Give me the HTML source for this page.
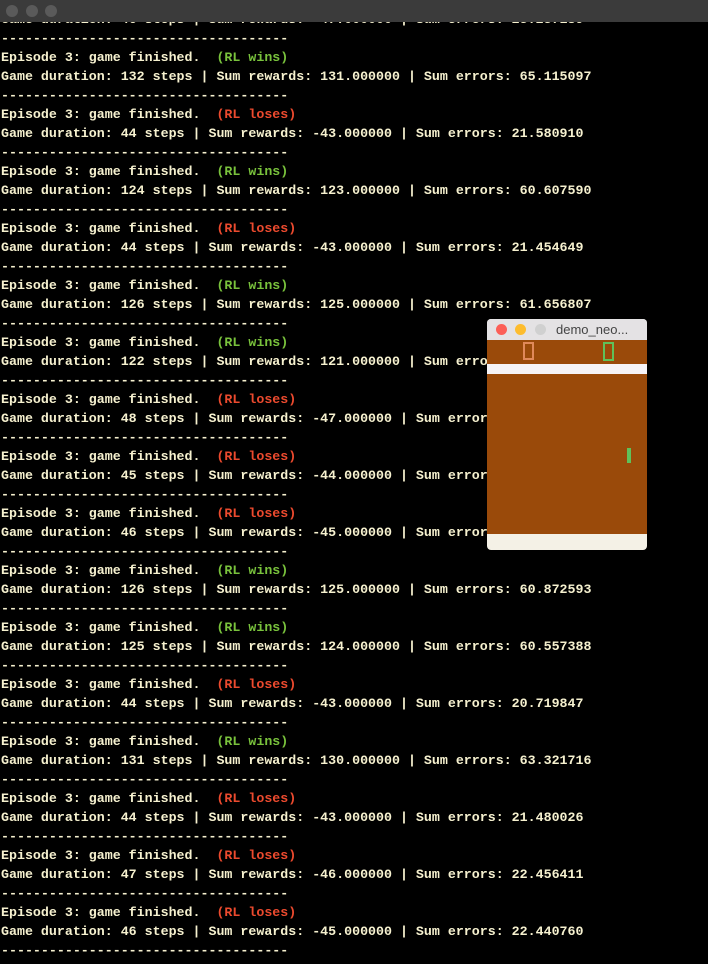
<!DOCTYPE html>
<html><head><meta charset="utf-8"><style>
body{margin:0;background:#000;width:708px;height:964px;overflow:hidden;position:relative;font-family:"Liberation Mono",monospace;}
#bar{position:absolute;left:0;top:0;width:708px;height:22px;background:#3b3b3b;z-index:2}
.d{position:absolute;top:5px;width:12px;height:12px;border-radius:50%;background:#5a5a5a}
#t{position:absolute;left:1px;top:10px;font-size:13.3px;line-height:19px;color:#f6f1cf;white-space:pre;font-weight:bold}
.g{color:#79c23c}.r{color:#ec4a2e}
#w{position:absolute;left:487px;top:319px;width:160px;height:231px;background:#f4f1e6;border-radius:4px;overflow:hidden}
#tb{height:21px;background:#e4e2e4;font-family:"Liberation Sans",sans-serif;font-size:13px;color:#444;line-height:21px}
.c{position:absolute;top:5px;width:11px;height:11px;border-radius:50%}
#gm{position:absolute;left:0;top:21px;width:160px;height:194px;background:#9a4a0a}
</style></head><body>
<div id="bar"><div class="d" style="left:6px"></div><div class="d" style="left:26px"></div><div class="d" style="left:45px"></div></div>
<div id="t">Game duration: 46 steps | Sum rewards: -47.000000 | Sum errors: 23.237189
------------------------------------
Episode 3: game finished.  <span class="g">(RL wins)</span>
Game duration: 132 steps | Sum rewards: 131.000000 | Sum errors: 65.115097
------------------------------------
Episode 3: game finished.  <span class="r">(RL loses)</span>
Game duration: 44 steps | Sum rewards: -43.000000 | Sum errors: 21.580910
------------------------------------
Episode 3: game finished.  <span class="g">(RL wins)</span>
Game duration: 124 steps | Sum rewards: 123.000000 | Sum errors: 60.607590
------------------------------------
Episode 3: game finished.  <span class="r">(RL loses)</span>
Game duration: 44 steps | Sum rewards: -43.000000 | Sum errors: 21.454649
------------------------------------
Episode 3: game finished.  <span class="g">(RL wins)</span>
Game duration: 126 steps | Sum rewards: 125.000000 | Sum errors: 61.656807
------------------------------------
Episode 3: game finished.  <span class="g">(RL wins)</span>
Game duration: 122 steps | Sum rewards: 121.000000 | Sum errors: 59.000000
------------------------------------
Episode 3: game finished.  <span class="r">(RL loses)</span>
Game duration: 48 steps | Sum rewards: -47.000000 | Sum errors: 23.000000
------------------------------------
Episode 3: game finished.  <span class="r">(RL loses)</span>
Game duration: 45 steps | Sum rewards: -44.000000 | Sum errors: 22.000000
------------------------------------
Episode 3: game finished.  <span class="r">(RL loses)</span>
Game duration: 46 steps | Sum rewards: -45.000000 | Sum errors: 22.000000
------------------------------------
Episode 3: game finished.  <span class="g">(RL wins)</span>
Game duration: 126 steps | Sum rewards: 125.000000 | Sum errors: 60.872593
------------------------------------
Episode 3: game finished.  <span class="g">(RL wins)</span>
Game duration: 125 steps | Sum rewards: 124.000000 | Sum errors: 60.557388
------------------------------------
Episode 3: game finished.  <span class="r">(RL loses)</span>
Game duration: 44 steps | Sum rewards: -43.000000 | Sum errors: 20.719847
------------------------------------
Episode 3: game finished.  <span class="g">(RL wins)</span>
Game duration: 131 steps | Sum rewards: 130.000000 | Sum errors: 63.321716
------------------------------------
Episode 3: game finished.  <span class="r">(RL loses)</span>
Game duration: 44 steps | Sum rewards: -43.000000 | Sum errors: 21.480026
------------------------------------
Episode 3: game finished.  <span class="r">(RL loses)</span>
Game duration: 47 steps | Sum rewards: -46.000000 | Sum errors: 22.456411
------------------------------------
Episode 3: game finished.  <span class="r">(RL loses)</span>
Game duration: 46 steps | Sum rewards: -45.000000 | Sum errors: 22.440760
------------------------------------</div>
<div id="w">
<div id="tb"><div class="c" style="left:9px;background:#fc5f57"></div><div class="c" style="left:28px;background:#fdbc2e"></div><div class="c" style="left:48px;background:#d0d0d0"></div><span style="position:absolute;left:69px">demo_neo...</span></div>
<div id="gm">
<div style="position:absolute;left:36px;top:2px;width:7px;height:14px;border:2px solid #e0895a"></div>
<div style="position:absolute;left:116px;top:2px;width:7px;height:15px;border:2px solid #5fc15a"></div>
<div style="position:absolute;left:0;top:24px;width:160px;height:10px;background:#f6f3f6"></div>
<div style="position:absolute;left:140px;top:108px;width:4px;height:15px;background:#5fc15a"></div>
</div>
</div>
</body></html>
